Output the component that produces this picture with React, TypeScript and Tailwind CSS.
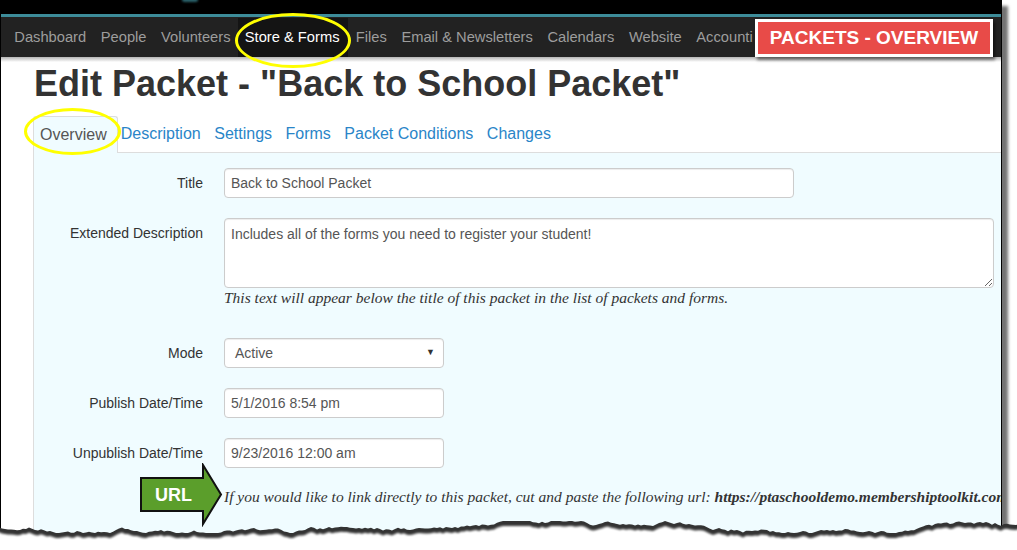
import React from "react";

// nav entries in the dark top bar
const navItems = [
  "Dashboard",
  "People",
  "Volunteers",
  "Store & Forms",
  "Files",
  "Email & Newsletters",
  "Calendars",
  "Website",
  "Accounting",
];

const tabs = ["Description", "Settings", "Forms", "Packet Conditions", "Changes"];

// jagged "torn paper" line for the bottom of the screenshot
const tearPoints = (() => {
  const pts: [number, number][] = [];
  let seed = 23;
  const rnd = () => {
    seed = (seed * 9301 + 49297) % 233280;
    return seed / 233280;
  };
  let y = 0;
  for (let x = -4; x <= 1022; x += 3) {
    y += (rnd() - 0.5) * 3.6;
    y = Math.max(-6, Math.min(6, y));
    pts.push([x, y + 12]);
  }
  return pts;
})();

const toPoly = (dy: number) =>
  tearPoints.map(([x, y]) => `${x},${(y + dy).toFixed(1)}`).join(" ") + " 1022,60 -4,60";

const Label = ({ children }: { children: React.ReactNode }) => (
  <div className="text-right text-[14px] leading-[30px] text-[#333]">{children}</div>
);

const inputCls =
  "h-[30px] rounded-[4px] border border-[#ccc] bg-white px-[6px] text-[14px] text-[#555] shadow-[inset_0_1px_1px_rgba(0,0,0,0.075)] outline-none";

export default function App() {
  return (
    <div className="relative h-[550px] w-[1017px] overflow-hidden bg-white font-['Liberation_Sans',Arial,sans-serif]">
      <div className="flex h-[545px] w-[1002px] flex-col overflow-hidden border-x border-black bg-white shadow-[6px_6px_3px_rgba(0,0,0,0.55)]">
        {/* top strip */}
        <div className="relative h-[14px] bg-black">
          <div className="absolute left-[181px] top-[-3px] h-[5px] w-[16px] rounded-full bg-[#3d8c99] opacity-70 blur-[1px]" />
        </div>
        <div className="h-[3px] bg-[#3d8c99]" />
        <nav className="flex h-[40px] items-center bg-[#222] text-[14.7px] text-[#9d9d9d]">
          <div className="flex h-full w-[752px] items-center overflow-hidden whitespace-nowrap pl-[6px] pt-[1px]">
            {navItems.map((n) => (
              <div
                key={n}
                className={
                  n === "Store & Forms"
                    ? "flex h-full items-center bg-[#141414] pl-[7px] pr-[9px] text-white"
                    : "px-[7.3px]"
                }
              >
                {n}
              </div>
            ))}
          </div>
        </nav>
        <div className="h-[5px] bg-gradient-to-b from-[#b5b5b5] to-white" />

        <h1 className="mt-[4px] pl-[33px] text-[36px] font-bold leading-none text-[#333]">
          Edit Packet - "Back to School Packet"
        </h1>

        {/* tabs */}
        <div className="mt-[14px] flex items-end pl-[32px] text-[16px]">
          <div className="relative -mb-px flex h-[37px] items-center rounded-t-[3px] border border-b-0 border-[#ddd] bg-[#f0fcff] pl-[6px] pr-[10px] text-[#555]">
            Overview
          </div>
          <div className="ml-[3px] flex h-[36px] items-center gap-[13.5px] text-[#2a85c8]">
            {tabs.map((t) => (
              <span key={t}>{t}</span>
            ))}
          </div>
        </div>

        {/* panel */}
        <div className="ml-[32px] flex-1 border-l border-t border-[#ddd] bg-[#f0fcff] pt-[15px]">
          <div className="grid grid-cols-[169px_1fr] gap-x-[21px]">
            <Label>Title</Label>
            <input className={`${inputCls} w-[570px]`} defaultValue="Back to School Packet" readOnly />

            <div className="col-span-2 h-[20px]" />

            <Label>Extended Description</Label>
            <div>
              <textarea
                className="block h-[70px] w-[770px] rounded-[4px] border border-[#ccc] bg-white px-[6px] pt-[5px] text-[14px] leading-[20px] text-[#555] shadow-[inset_0_1px_1px_rgba(0,0,0,0.075)] outline-none"
                defaultValue="Includes all of the forms you need to register your student!"
                readOnly
              />
              <p className="mt-[1px] font-['Liberation_Serif',serif] text-[15.5px] italic leading-[18px] text-[#333]">
                This text will appear below the title of this packet in the list of packets and forms.
              </p>
            </div>

            <div className="col-span-2 h-[31px]" />

            <Label>Mode</Label>
            <div className={`${inputCls} flex w-[220px] items-center justify-between pl-[10px] pr-[8px]`}>
              <span>Active</span>
              <span className="text-[9px] text-[#333]">▼</span>
            </div>

            <div className="col-span-2 h-[20px]" />

            <Label>Publish Date/Time</Label>
            <input className={`${inputCls} w-[220px]`} defaultValue="5/1/2016 8:54 pm" readOnly />

            <div className="col-span-2 h-[20px]" />

            <Label>Unpublish Date/Time</Label>
            <input className={`${inputCls} w-[220px]`} defaultValue="9/23/2016 12:00 am" readOnly />

            <div className="col-span-2 h-[20px]" />

            <div />
            <div className="overflow-hidden">
              <p className="whitespace-nowrap font-['Liberation_Serif',serif] text-[15.5px] italic leading-[18px] text-[#333]">
                If you would like to link directly to this packet, cut and paste the following url:{" "}
                <b>https://ptaschooldemo.membershiptoolkit.com</b>
              </p>
            </div>
          </div>
        </div>
      </div>

      {/* callout label */}
      <div className="absolute left-[755px] top-[19px] flex h-[38px] w-[238px] items-center justify-center border-[3px] border-white bg-[#e84b48] text-[19px] font-bold text-white shadow-[2px_3px_3px_rgba(0,0,0,0.5)]">
        PACKETS - OVERVIEW
      </div>

      {/* yellow highlight rings */}
      <div className="absolute left-[235px] top-[13px] h-[55px] w-[116px] rounded-[50%] border-[3px] border-[#ffff00]" />
      <div className="absolute left-[24px] top-[108px] h-[47px] w-[97px] rounded-[50%] border-[3px] border-[#ffff00]" />

      {/* URL arrow */}
      <svg className="absolute left-[139px] top-[463px]" width="86" height="64" viewBox="0 0 86 64">
        <polygon
          points="2,15 64,15 64,2 82,31.5 64,61 64,48 2,48"
          fill="#5b9e2b"
          stroke="#111"
          strokeWidth="2"
          strokeLinejoin="miter"
        />
        <text x="16" y="38" fill="#fff" fontSize="18" fontWeight="bold" fontFamily="Liberation Sans, Arial, sans-serif">
          URL
        </text>
      </svg>

      {/* torn bottom edge */}
      <svg className="absolute left-0 top-[515px]" width="1017" height="35" viewBox="0 0 1017 35">
        <defs>
          <filter id="soft" x="-5%" y="-50%" width="110%" height="200%">
            <feGaussianBlur stdDeviation="1.3" />
          </filter>
        </defs>
        <polygon points={toPoly(0)} fill="#333" />
        <polygon points={toPoly(5)} fill="#ffffff" filter="url(#soft)" />
        <rect x="0" y="26" width="1017" height="9" fill="#fff" />
      </svg>
    </div>
  );
}
